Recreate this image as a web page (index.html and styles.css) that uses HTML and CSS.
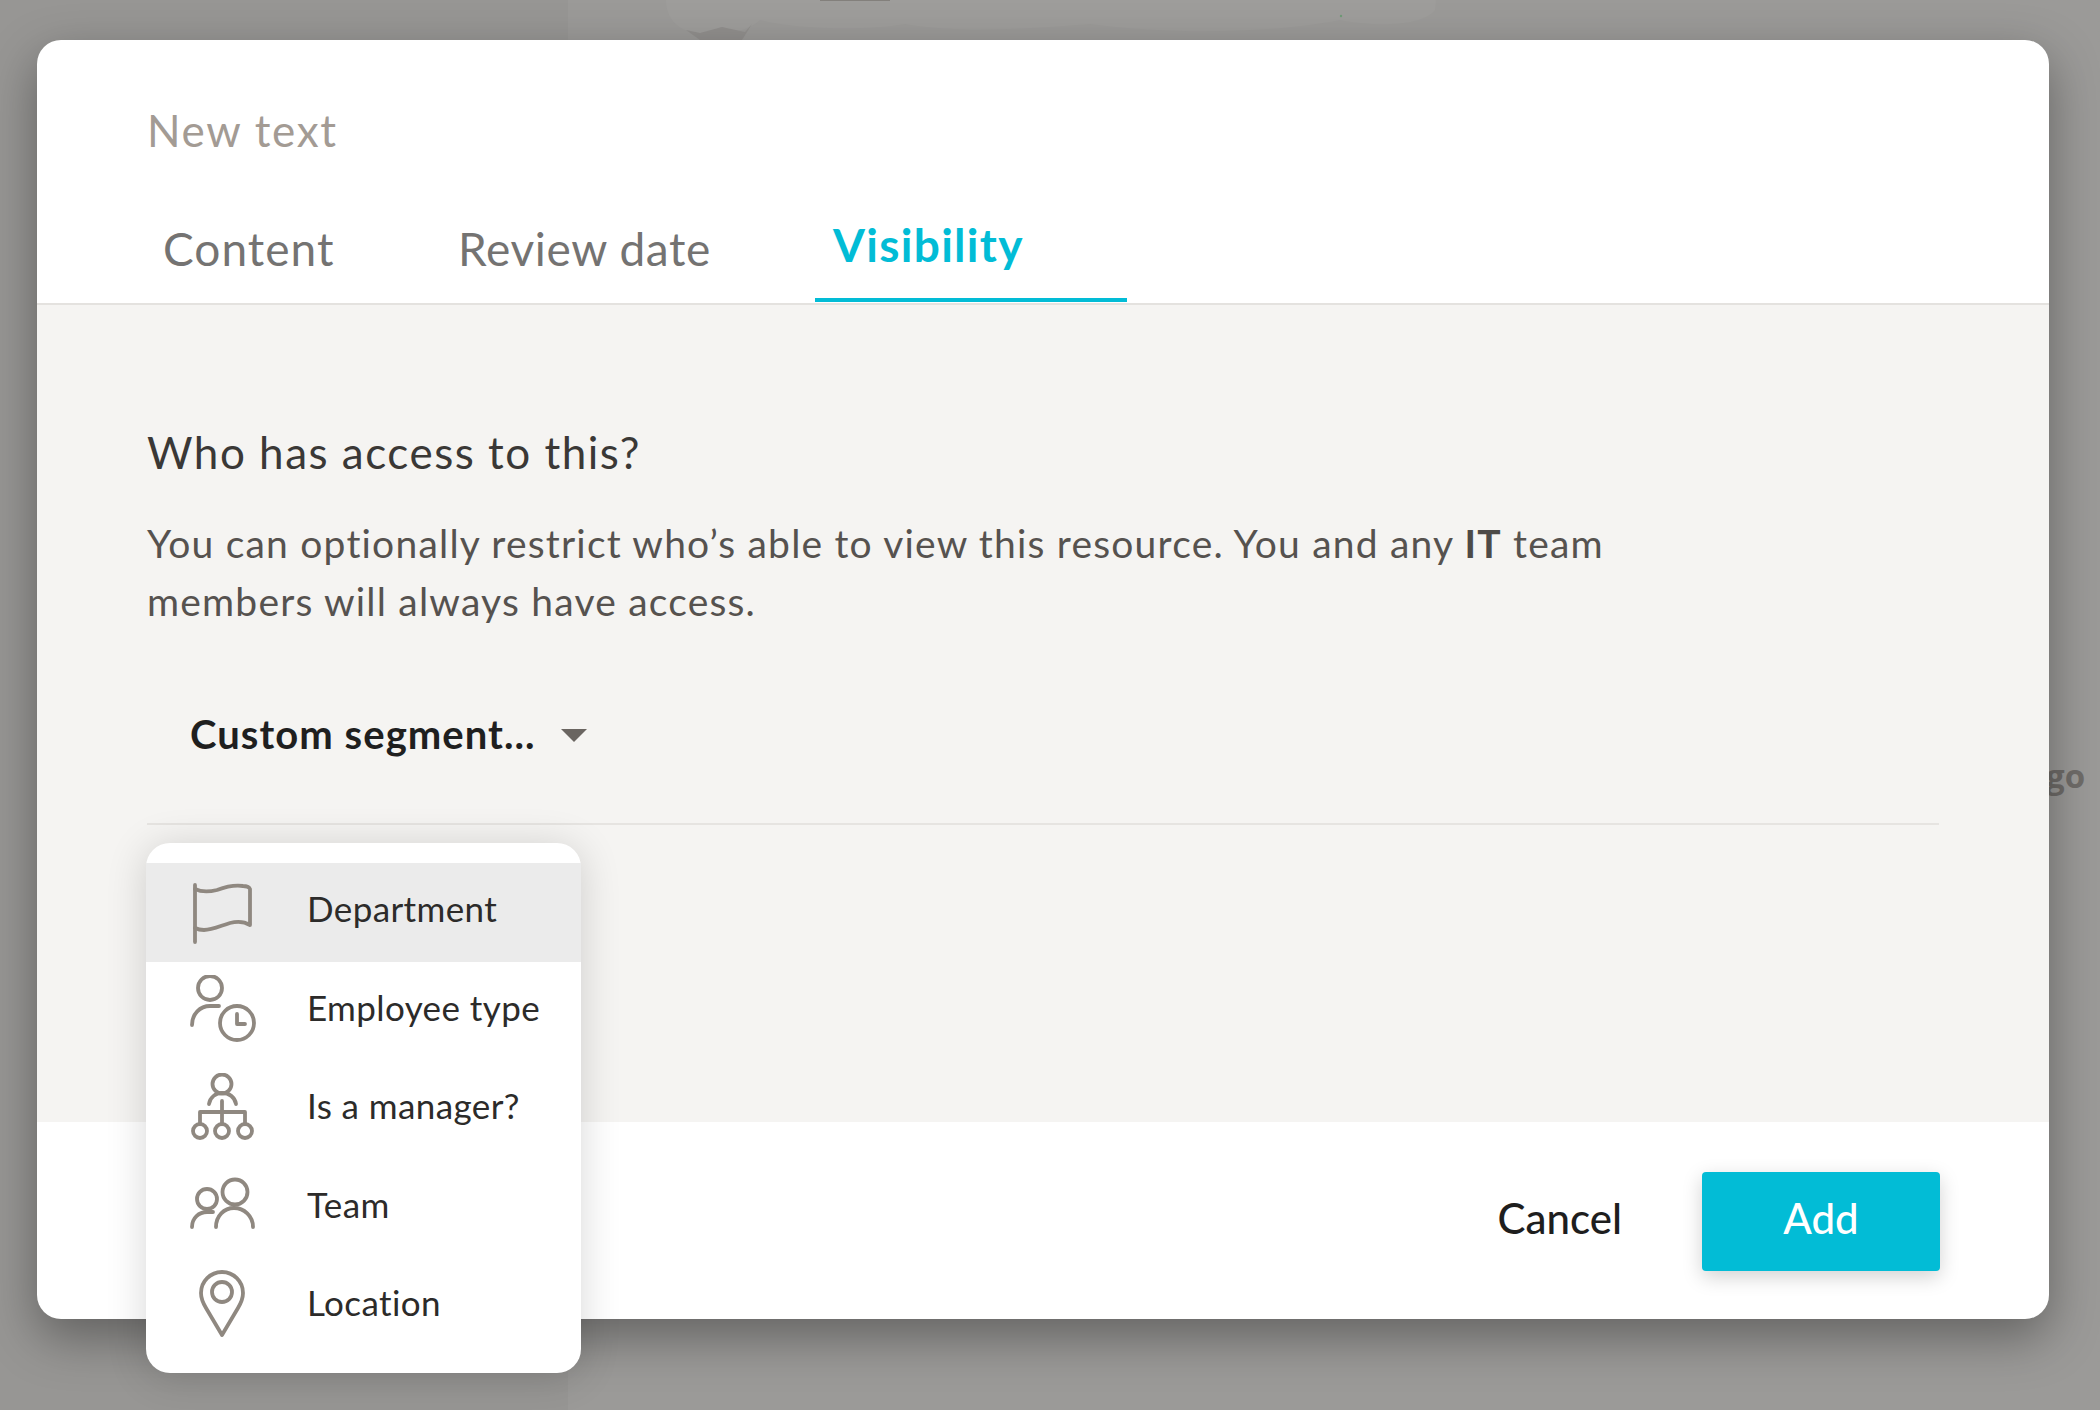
FILE: index.html
```html
<!DOCTYPE html>
<html lang="en">
<head>
<meta charset="utf-8">
<title>New text</title>
<link rel="stylesheet" href="styles.css">
</head>
<body>
<svg class="backdrop-art" viewBox="0 0 2100 40">
  <path class="art-light" d="M666 0C666 16 676 32 700 33C712 33 718 28 722 27C730 33 745 33 760 20C790 28 860 32 905 24C960 34 1040 28 1090 24C1180 36 1280 32 1340 20C1370 26 1420 28 1435 10L1436 0Z"/>
  <path class="art-wedge" d="M686 30L700 33L722 27L745 32L752 24L742 40H700Z"/>
  <path class="art-ink" d="M820 0H890V1H820Z"/>
  <circle class="art-dot" cx="1341" cy="16" r="1.2"/>
</svg>
<div class="backdrop-text">go</div>
<main class="modal">
  <header class="modal-head">
    <h1 class="title">New text</h1>
    <nav class="tabs">
      <a class="tab tab-content">Content</a>
      <a class="tab tab-review">Review date</a>
      <a class="tab tab-active">Visibility</a>
    </nav>
  </header>
  <section class="modal-body">
    <h2 class="heading">Who has access to this?</h2>
    <p class="desc">You can optionally restrict who’s able to view this resource. You and any <b>IT</b> team<br>members will always have access.</p>
    <div class="select"><span>Custom segment...</span><i class="caret"></i></div>
    <hr class="divider">
  </section>
  <footer class="modal-foot">
    <span class="cancel">Cancel</span>
    <button class="add">Add</button>
  </footer>
  <ul class="menu">
    <li class="item item-hover">
      <svg class="icon" viewBox="0 0 72 72"><path d="M9 9V66"/><path d="M9 13C15 16 23 16 31 14C39 11 50 9 57 10C60 10 63 11 64 13V49C59 46 52 45 44 47C34 50 26 54 18 54C15 54 11 53 9 52"/></svg>
      <span>Department</span>
    </li>
    <li class="item">
      <svg class="icon" viewBox="0 0 72 72"><circle cx="24" cy="13" r="12"/><path d="M6 50C6 39 14 31 24 31H33"/><circle cx="51" cy="48" r="17"/><path d="M51 39V49H59"/></svg>
      <span>Employee type</span>
    </li>
    <li class="item">
      <svg class="icon" viewBox="0 0 72 72"><circle cx="36" cy="11" r="9.5"/><path d="M23 31C24 24 30 20 36 20C43 20 49 24 50 31"/><path d="M36 28V51"/><path d="M14 51V39H59V51"/><circle cx="14" cy="58" r="7"/><circle cx="36" cy="58" r="7"/><circle cx="59" cy="58" r="7"/></svg>
      <span>Is a manager?</span>
    </li>
    <li class="item">
      <svg class="icon" viewBox="0 0 72 72"><circle cx="21" cy="27" r="10"/><path d="M6 55C6 46 13 40 21 40H27"/><circle cx="49" cy="20" r="12.5"/><path d="M30 55C30 44 38 36 48 36C58 36 67 44 67 55"/></svg>
      <span>Team</span>
    </li>
    <li class="item">
      <svg class="icon" viewBox="0 0 72 72"><path d="M36 65L20 38C17 33 15 29 15 23A21 21 0 0 1 57 23C57 29 55 33 52 38Z"/><circle cx="36" cy="22" r="10"/></svg>
      <span>Location</span>
    </li>
  </ul>
</main>
</body>
</html>
```
FILE: styles.css
```css
* { box-sizing: border-box; }
html, body { margin: 0; height: 1410px; overflow: hidden; }
body {
  position: relative;
  padding: 40px 51px 0 37px;
  font-family: Lato, "Open Sans", sans-serif;
  font-variant-ligatures: none;
  background: linear-gradient(90deg, #979694 0, #979694 568px, #9b9a98 568px, #9b9a98 100%);
}
.backdrop-art {
  position: absolute;
  left: 0;
  top: 0;
  width: 2100px;
  height: 40px;
}
.art-light { fill: #9e9d9b; }
.art-wedge { fill: #918f8d; }
.art-ink { fill: #83807c; }
.art-dot { fill: #6f9a76; }
.backdrop-text {
  position: absolute;
  left: 2046px;
  top: 753px;
  font: 700 33px "Open Sans", sans-serif;
  color: #6f6c69;
}
.modal {
  position: relative;
  display: flex;
  flex-direction: column;
  height: 1279px;
  border-radius: 24px;
  background: #fff;
  box-shadow: 0 18px 50px rgba(0, 0, 0, .36);
}
.modal-head {
  height: 265px;
  padding: 0 0 0 110px;
  border-bottom: 2px solid #e4e2df;
}
.title {
  margin: 0;
  padding-top: 64px;
  font-size: 44px;
  line-height: 52px;
  font-weight: 400;
  color: #a39b94;
  letter-spacing: 1.7px;
}
.tabs {
  display: flex;
  margin: 0 0 0 16px;
  padding-top: 67px;
  align-items: flex-end;
  height: 146px;
}
.tab {
  display: block;
  height: 82px;
  padding-top: 1px;
  font-size: 46px;
  line-height: 56px;
  color: #747372;
  letter-spacing: .9px;
}
.tab-content { width: 295px; letter-spacing: 1.05px; }
.tab-review { width: 357px; letter-spacing: .65px; }
.tab-active {
  width: 312px;
  padding: 0 0 0 18px;
  line-height: 50px;
  font-weight: 700;
  letter-spacing: 1.3px;
  color: #02bcd6;
  border-bottom: 4px solid #02bcd6;
}
.modal-body {
  height: 817px;
  padding: 119px 110px 0;
  background: #f5f4f2;
}
.heading {
  margin: 0;
  font-size: 44px;
  line-height: 56px;
  font-weight: 400;
  letter-spacing: 1.5px;
  color: #3a3836;
}
.desc {
  margin: 34px 0 0;
  font-size: 39px;
  line-height: 58px;
  letter-spacing: 1.2px;
  color: #56524f;
}
.desc b { color: #4d4a47; }
.select {
  display: flex;
  align-items: center;
  gap: 25px;
  margin-top: 79px;
  padding-left: 43px;
  height: 50px;
  font-size: 40px;
  font-weight: 700;
  letter-spacing: 1.05px;
  color: #1f1f1f;
}
.caret {
  width: 0;
  height: 0;
  margin-top: 2px;
  border-left: 13px solid transparent;
  border-right: 13px solid transparent;
  border-top: 13px solid #6a6561;
}
.divider {
  margin: 64px 0 0;
  border: 0;
  height: 2px;
  background: #e6e4e1;
}
.modal-foot {
  flex: 1;
  display: flex;
  align-items: center;
  justify-content: flex-end;
  padding: 1px 109px 0 0;
  border-radius: 0 0 24px 24px;
}
.cancel {
  margin-right: 80px;
  padding-bottom: 6px;
  font-size: 42px;
  font-weight: 500;
  color: #1e1e1e;
}
.add {
  width: 238px;
  height: 99px;
  padding: 0 0 6px;
  border: 0;
  border-radius: 4px;
  background: #02bcd6;
  color: #fff;
  font: 500 42px Lato, sans-serif;
  box-shadow: 0 6px 20px rgba(0, 0, 0, .18);
}
.menu {
  position: absolute;
  left: 109px;
  top: 803px;
  width: 435px;
  height: 530px;
  margin: 0;
  padding: 20px 0 0;
  list-style: none;
  background: #fff;
  border-radius: 24px;
  box-shadow: 0 4px 40px rgba(0, 0, 0, .16);
}
.item {
  display: flex;
  align-items: center;
  gap: 49px;
  height: 98.5px;
  padding-left: 40px;
  font-size: 35px;
  letter-spacing: .4px;
  color: #2c2b2a;
}
.item span { padding-bottom: 8px; }
.item-hover { background: #ebebeb; }
.icon {
  flex: none;
  width: 72px;
  height: 72px;
  fill: none;
  stroke: #8f8880;
  stroke-width: 3.8;
  stroke-linecap: round;
  stroke-linejoin: round;
}
```
